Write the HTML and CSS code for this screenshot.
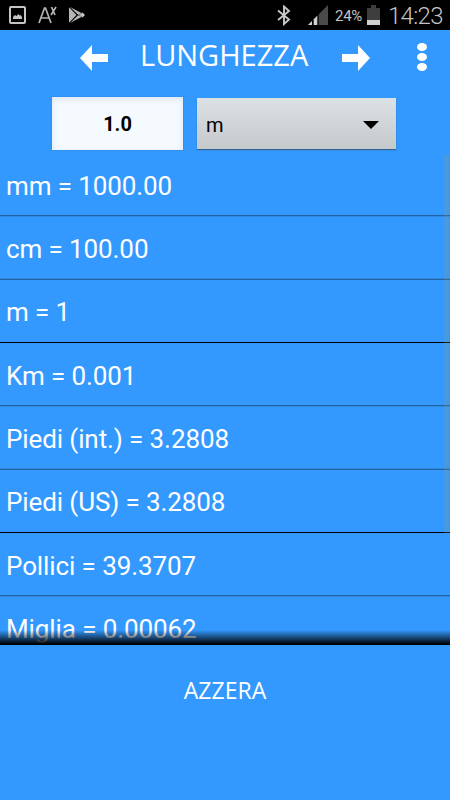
FILE: index.html
```html
<!DOCTYPE html>
<html lang="it">
<head>
  <meta charset="UTF-8">
  <meta name="viewport" content="width=device-width, initial-scale=1.0">
  <title>Lunghezza</title>
  <link rel="stylesheet" href="styles.css">
</head>
<body>
  <div class="status-bar">
    <div class="status-left">
      <svg width="17" height="18" viewBox="0 0 17 18">
        <rect x="1" y="1" width="15" height="16" rx="1" fill="none" stroke="#c4c4c4" stroke-width="2"/>
        <path d="M4 13v-2l2-2 1.500 1 2-2 1 1.500 1-.5 1.500 2v2z" fill="#c4c4c4"/>
      </svg>
      <svg width="19" height="18" viewBox="0 0 19 18">
        <path d="M1 17L6.500 2h1L13 17M3 12h8M13.500 1l3.500 8M18 1l-5 8" fill="none" stroke="#b4b4b4" stroke-width="1.700"/>
      </svg>
      <svg width="18" height="18" viewBox="0 0 18 18">
        <path d="M1 1v16l7.500-8z" fill="#b4b4b4"/>
        <path d="M2 1l11.500 6-3 2.500zM2 17l11.500-6-3-2.500z" fill="#b4b4b4"/>
        <path d="M1 1l9 8-9 8" fill="none" stroke="#111" stroke-width="0.800"/>
        <path d="M11.500 9l3-2.500L17 9l-2.500 2.500z" fill="#c4c4c4"/>
      </svg>
    </div>
    <div class="status-right">
      <svg class="bluetooth" width="14" height="21" viewBox="0 0 14 21">
        <path d="M1 5.500l11 9-5 4.500V1.500L12 6 1 15" fill="none" stroke="#c8c8c8" stroke-width="1.900"/>
      </svg>
      <svg class="signal" width="20" height="20" viewBox="0 0 20 20">
        <path d="M0 20L20 0V20z" fill="#4a4a4a"/>
        <path d="M0 20l4-4v4zM5.500 20v-5.500L9.500 10.500V20z" fill="#d0d0d0"/>
        <path d="M4 15v5h1.500v-5zM9.500 9v11h1.200V9z" fill="#000"/>
      </svg>
      <span class="percent">24%</span>
      <svg class="battery" width="13" height="20" viewBox="0 0 13 20">
        <path d="M0 3h4V0h5v3h4v17H0z" fill="#3e3e3e"/>
        <rect y="15" width="13" height="5" fill="#d0d0d0"/>
      </svg>
      <span class="clock">14:23</span>
    </div>
  </div>

  <div class="header">
    <svg class="arrow-left" width="28" height="26" viewBox="0 0 28 26">
      <path d="M0 13L12 0v9h16v8H12v9z" fill="#fff"/>
    </svg>
    <h1>LUNGHEZZA</h1>
    <svg class="arrow-right" width="28" height="26" viewBox="0 0 28 26">
      <path d="M28 13L16 0v9H0v8h16v9z" fill="#fff"/>
    </svg>
    <div class="menu"><i></i><i></i><i></i></div>
  </div>

  <div class="controls">
    <input type="text" class="value" value="1.0">
    <button class="unit">
      <span>m</span>
      <svg width="16" height="8" viewBox="0 0 16 8"><path d="M0 0h16L8 8z" fill="#000"/></svg>
    </button>
  </div>

  <div class="results">
    <div class="row">mm = 1000.00</div>
    <div class="row">cm = 100.00</div>
    <div class="row">m = 1</div>
    <div class="row">Km = 0.001</div>
    <div class="row">Piedi (int.) = 3.2808</div>
    <div class="row">Piedi (US) = 3.2808</div>
    <div class="row">Pollici = 39.3707</div>
    <div class="row">Miglia = 0.00062</div>
    <div class="scrollbar"></div>
    <div class="fade"></div>
  </div>

  <button class="reset">AZZERA</button>
</body>
</html>
```

FILE: styles.css
```css
* {
  box-sizing: border-box;
}

body {
  margin: 0;
  height: 800px;
  overflow: hidden;
  background-color: #3399ff;
  color: white;
  font-family: Roboto, sans-serif;
}

svg {
  display: block;
  flex: none;
}

button {
  border: none;
  background: none;
  font-family: inherit;
}

.status-bar {
  display: flex;
  justify-content: space-between;
  height: 30px;
  background-color: #000;
  color: #c4c4c4;
}

.status-left {
  display: flex;
  gap: 12px;
  padding: 6px 0 0 9px;
}

.status-left svg:last-child {
  margin-left: -1px;
}

.status-right {
  display: flex;
  padding-right: 7px;
}

.bluetooth {
  margin: 5px 17px 0 0;
}

.signal {
  margin: 5px 7px 0 0;
}

.percent {
  width: 28px;
  margin-right: 4px;
  font-size: 15px;
  line-height: 32px;
  letter-spacing: -0.3px;
}

.battery {
  margin: 5px 8px 0 0;
}

.clock {
  width: 55px;
  font-size: 24px;
  font-weight: 300;
  line-height: 33px;
  letter-spacing: -0.7px;
}

.header {
  display: flex;
  height: 67px;
  padding-left: 80px;
}

h1 {
  width: 169px;
  margin: 0 0 0 32px;
  font-family: "Open Sans", sans-serif;
  font-size: 29px;
  font-weight: 400;
  line-height: 49px;
  white-space: nowrap;
}

.arrow-left {
  margin-top: 15px;
}

.arrow-right {
  margin: 15px 0 0 33px;
}

.menu {
  display: flex;
  flex-direction: column;
  gap: 2px;
  margin: 13px 0 0 47px;
}

.menu i {
  width: 10px;
  height: 8px;
  border-radius: 50%;
  background-color: #fff;
}

.controls {
  display: flex;
  gap: 14px;
  height: 56px;
  padding-left: 52px;
}

.value {
  width: 131px;
  height: 53px;
  border: none;
  padding: 0;
  background-color: #f5faff;
  box-shadow: inset 0 2px 6px #dde4ee, 0 0 1px #2470b8;
  color: #000;
  font-family: Roboto, sans-serif;
  font-size: 20px;
  font-weight: 700;
  text-align: center;
}

.unit {
  display: flex;
  align-items: center;
  justify-content: space-between;
  width: 199px;
  height: 51px;
  margin-top: 1px;
  padding: 3px 17px 0 9px;
  background: linear-gradient(#dce1e5, #c5c9cc);
  box-shadow: 0 1px 1px #356292;
  color: #000;
  font-size: 20px;
}

.results {
  position: relative;
  height: 492px;
  overflow: hidden;
}

.row {
  height: 63px;
  padding: 3px 6px 0;
  border-bottom: 1px solid #24629f;
  box-shadow: 0 1px #2f89e3;
  font-size: 26px;
  line-height: 61px;
  letter-spacing: -0.1px;
}

.row:nth-child(3n+2) {
  height: 64px;
  box-shadow: inset 0 -1px #2f89e3;
}

.row:nth-child(3n) {
  padding-top: 2px;
  border-color: #000;
  box-shadow: none;
}

.scrollbar {
  position: absolute;
  top: 2px;
  right: 1px;
  width: 5px;
  height: 378px;
  background-color: rgba(153, 153, 102, 0.2);
}

/* shadow at the lower edge of the list */
.fade {
  position: absolute;
  bottom: 0;
  left: 0;
  width: 100%;
  height: 15px;
  background: linear-gradient(rgba(0, 0, 0, 0), #000 95%);
}

.reset {
  display: block;
  width: 100%;
  height: 90px;
  padding: 0;
  color: white;
  font-family: "Open Sans", sans-serif;
  font-size: 23px;
}
```
